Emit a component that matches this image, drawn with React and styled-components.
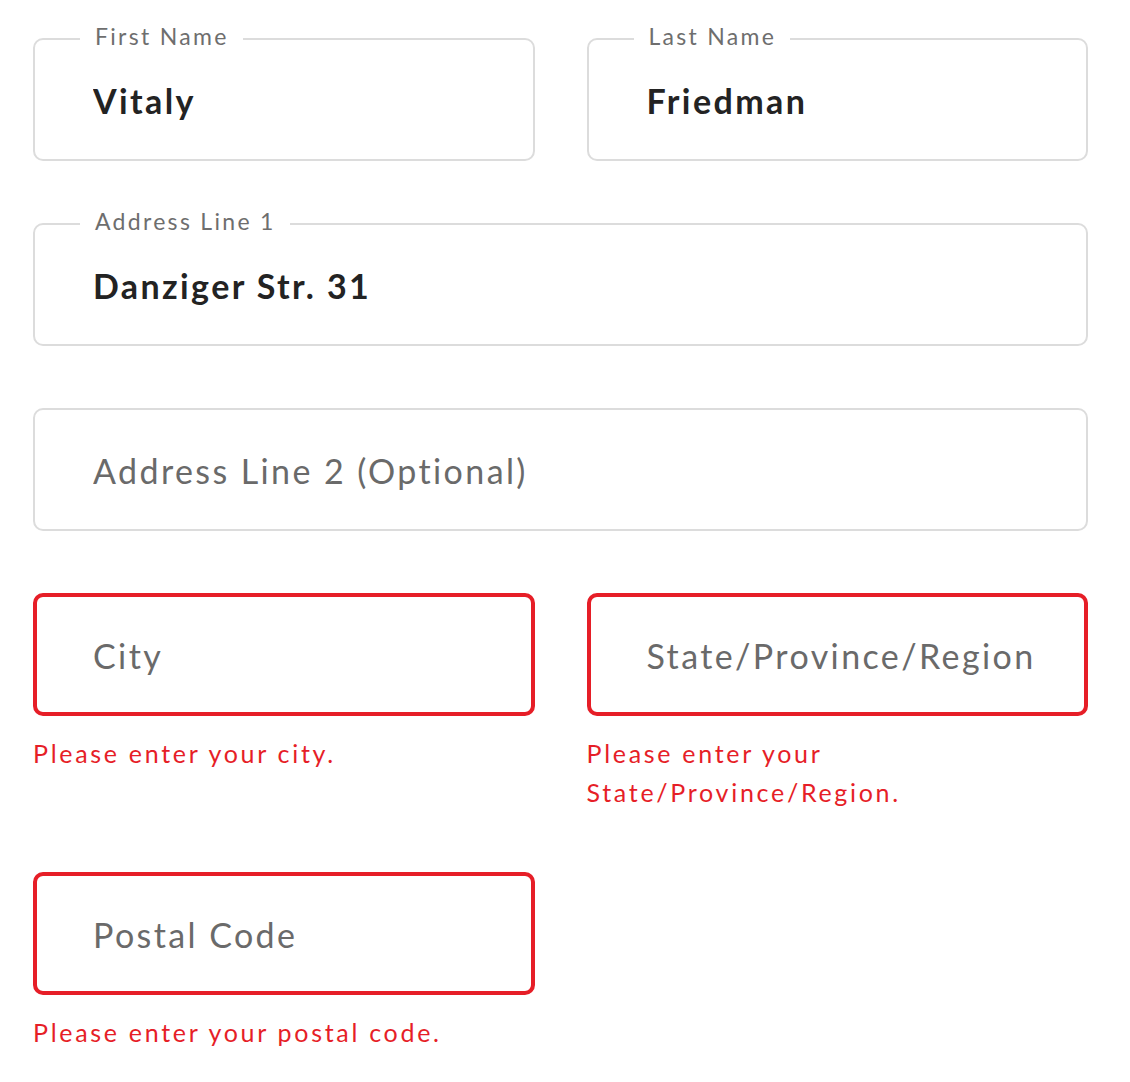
import React from 'react';
import styled, { createGlobalStyle } from 'styled-components';

const GlobalStyle = createGlobalStyle`
  body {
    margin: 0;
    background: #fff;
    font-family: Lato, "Noto Sans", sans-serif;
  }
`;

const Form = styled.form`
  display: grid;
  grid-template-columns: 1fr 1fr;
  column-gap: 52px;
  row-gap: 62px;
  align-items: start;
  padding: 38px 42px 40px 33px;
`;

const Cell = styled.div`
  grid-column: ${p => (p.wide ? '1 / span 2' : 'auto')};
  display: flex;
  flex-direction: column;
`;

const Box = styled.label`
  position: relative;
  display: flex;
  align-items: center;
  height: 123px;
  box-sizing: border-box;
  border: ${p => (p.error ? '4px solid #e61e27' : '2px solid #dcdcdc')};
  border-radius: 10px;
  padding-left: ${p => (p.error ? '56px' : '58px')};
  padding-top: 1px;
`;

const Legend = styled.span`
  position: absolute;
  top: -17px;
  left: 45px;
  padding: 0 14px 0 15px;
  background: #fff;
  color: #6e6e6e;
  font-size: 23px;
  letter-spacing: 2.3px;
  line-height: 26px;
`;

const Input = styled.input`
  border: none;
  outline: none;
  background: transparent;
  width: 100%;
  padding: 0;
  font-family: Lato, "Noto Sans", sans-serif;
  font-size: 34px;
  font-weight: 700;
  letter-spacing: 2.4px;
  color: #232323;

  &::placeholder {
    color: #6a6a6a;
    font-weight: 400;
    opacity: 1;
  }
`;

const ErrorText = styled.div`
  margin-top: 18px;
  margin-bottom: -2px;
  color: #e61e27;
  font-size: 25px;
  line-height: 39px;
  letter-spacing: 2.7px;
`;

function Field({ label, value, placeholder, error, wide }) {
  return (
    <Cell wide={wide}>
      <Box error={!!error}>
        {label && <Legend>{label}</Legend>}
        <Input defaultValue={value} placeholder={placeholder} />
      </Box>
      {error && <ErrorText>{error}</ErrorText>}
    </Cell>
  );
}

export default function App() {
  return (
    <>
      <GlobalStyle />
      <Form onSubmit={e => e.preventDefault()}>
        <Field label="First Name" value="Vitaly" />
        <Field label="Last Name" value="Friedman" />
        <Field wide label="Address Line 1" value="Danziger Str. 31" />
        <Field wide placeholder="Address Line 2 (Optional)" />
        <Field placeholder="City" error="Please enter your city." />
        <Field
          placeholder="State/Province/Region"
          error={<>Please enter your<br />State/Province/Region.</>}
        />
        <Field placeholder="Postal Code" error="Please enter your postal code." />
      </Form>
    </>
  );
}
